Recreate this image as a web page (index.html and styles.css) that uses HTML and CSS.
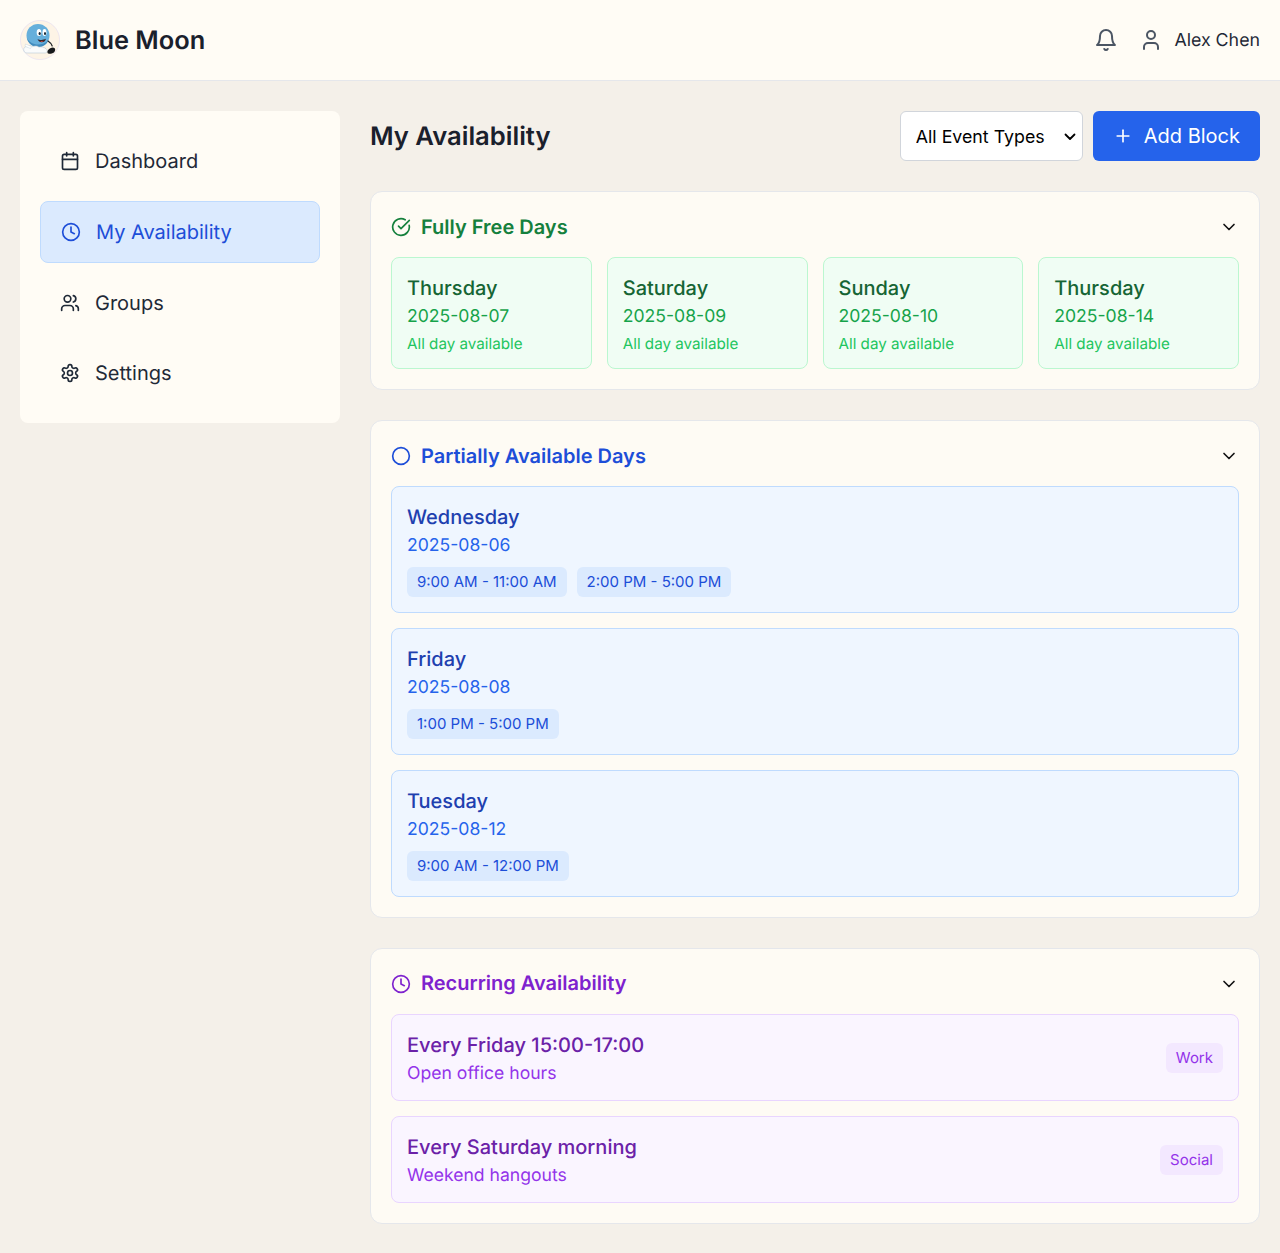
FILE: index.html
```html
<!DOCTYPE html>
<html lang="en">
<head>
  <meta charset="UTF-8">
  <meta name="viewport" content="width=device-width, initial-scale=1.0">
  <title>Blue Moon - My Availability</title>
  <link rel="stylesheet" href="styles.css">
</head>
<body>

  <header class="topbar">
    <div class="brand">
      <svg class="logo" viewBox="0 0 40 40">
        <circle cx="20" cy="20" r="19.6" fill="#fdf4e6" stroke="#e2daf0" stroke-width="0.6"/>
        <circle cx="18" cy="15.500" r="11.500" fill="#66afdb"/>
        <path d="M7 18c2 4 6 6.500 11 6.500 3.500 0 6.500-1 10-3.500-2 4-6 6-10 6-5 0-10-3.500-11-9z" fill="#418bbd"/>
        <ellipse cx="19" cy="12.500" rx="2.300" ry="3.600" fill="#fff"/>
        <ellipse cx="24.500" cy="12.500" rx="2" ry="3.400" fill="#fff"/>
        <ellipse cx="19.700" cy="13.500" rx="1.100" ry="1.600" fill="#14202c"/>
        <ellipse cx="25" cy="13.500" rx="1" ry="1.500" fill="#14202c"/>
        <path d="M17.500 19c2 1.300 6 1.300 8.500-.2-.8 2.700-2.300 3.400-4.200 3.400s-3.400-.9-4.300-3.200z" fill="#3a2326"/>
        <path d="M20 21.100h3.500l-1.700.9z" fill="#d9534f"/>
        <path d="M4 31c-1.200-2.500 1-5 3.500-4.300 1-1.500 4-1.500 5 0 2-1 5-1 6.500.5 2-.6 5-.2 7 1.500 2 1.700 1.500 4.300-1 4.300H7c-1.500 0-2.500-.8-3-2z" fill="#fafbfb" stroke="#b9cbd6" stroke-width="0.6"/>
        <path d="M5.500 24l6 2.500-1 2-5.500-2.200z" fill="#fff" stroke="#b9cbd6" stroke-width="0.4"/>
        <path d="M28 21c2 1.300 3.600 3 4.200 5" fill="none" stroke="#1c2024" stroke-width="1.200" stroke-linecap="round"/>
        <path d="M27.500 31c1-1.500 2.500-3.200 5-3.500 2 0 3 1.200 2.600 2.800-.4 1.700-1.600 2.900-3.300 3.200-2 .4-4 .3-4.300-.8-.1-.6 0-1.200 0-1.700z" fill="#16181b"/>
      </svg>
      <span class="brand-name">Blue Moon</span>
    </div>
    <div class="user-area">
      <svg class="icon icon-top" viewBox="0 0 24 24"><path d="M6 8a6 6 0 0 1 12 0c0 7 3 9 3 9H3s3-2 3-9"/><path d="M10.300 21a1.940 1.940 0 0 0 3.400 0"/></svg>
      <svg class="icon icon-top" viewBox="0 0 24 24"><path d="M19 21v-2a4 4 0 0 0-4-4H9a4 4 0 0 0-4 4v2"/><circle cx="12" cy="7" r="4"/></svg>
      <span class="user-name">Alex Chen</span>
    </div>
  </header>

  <div class="page">
    <nav class="sidebar">
      <a class="nav-item" href="#">
        <svg class="icon" viewBox="0 0 24 24"><path d="M8 2v4"/><path d="M16 2v4"/><rect x="3" y="4" width="18" height="18" rx="2"/><path d="M3 10h18"/></svg>
        Dashboard
      </a>
      <a class="nav-item active" href="#">
        <svg class="icon" viewBox="0 0 24 24"><circle cx="12" cy="12" r="10"/><polyline points="12 6 12 12 16 14"/></svg>
        My Availability
      </a>
      <a class="nav-item" href="#">
        <svg class="icon" viewBox="0 0 24 24"><path d="M16 21v-2a4 4 0 0 0-4-4H6a4 4 0 0 0-4 4v2"/><circle cx="9" cy="7" r="4"/><path d="M22 21v-2a4 4 0 0 0-3-3.870"/><path d="M16 3.130a4 4 0 0 1 0 7.750"/></svg>
        Groups
      </a>
      <a class="nav-item" href="#">
        <svg class="icon" viewBox="0 0 24 24"><path d="M12.220 2h-.44a2 2 0 0 0-2 2v.18a2 2 0 0 1-1 1.730l-.43.25a2 2 0 0 1-2 0l-.15-.08a2 2 0 0 0-2.730.73l-.22.38a2 2 0 0 0 .73 2.730l.15.1a2 2 0 0 1 1 1.720v.51a2 2 0 0 1-1 1.740l-.15.09a2 2 0 0 0-.73 2.730l.22.38a2 2 0 0 0 2.730.73l.15-.08a2 2 0 0 1 2 0l.43.25a2 2 0 0 1 1 1.730V20a2 2 0 0 0 2 2h.44a2 2 0 0 0 2-2v-.18a2 2 0 0 1 1-1.730l.43-.25a2 2 0 0 1 2 0l.15.08a2 2 0 0 0 2.730-.73l.22-.39a2 2 0 0 0-.73-2.730l-.15-.08a2 2 0 0 1-1-1.740v-.5a2 2 0 0 1 1-1.740l.15-.09a2 2 0 0 0 .73-2.730l-.22-.38a2 2 0 0 0-2.730-.73l-.15.08a2 2 0 0 1-2 0l-.43-.25a2 2 0 0 1-1-1.730V4a2 2 0 0 0-2-2z"/><circle cx="12" cy="12" r="3"/></svg>
        Settings
      </a>
    </nav>

    <main class="content">
      <div class="content-head">
        <h1>My Availability</h1>
        <div class="actions">
          <select class="type-select">
            <option>All Event Types</option>
            <option>Work</option>
            <option>Social</option>
          </select>
          <button class="add-btn">
            <svg class="icon" viewBox="0 0 24 24"><path d="M5 12h14"/><path d="M12 5v14"/></svg>
            Add Block
          </button>
        </div>
      </div>

      <section class="panel">
        <div class="panel-head green">
          <h2>
            <svg class="icon" viewBox="0 0 24 24"><path d="M21.801 10A10 10 0 1 1 17 3.335"/><path d="m9 11 3 3L22 4"/></svg>
            Fully Free Days
          </h2>
          <svg class="icon chevron" viewBox="0 0 24 24"><path d="m6 9 6 6 6-6"/></svg>
        </div>
        <div class="free-grid">
          <div class="free-card">
            <div class="day">Thursday</div>
            <div class="date">2025-08-07</div>
            <div class="note">All day available</div>
          </div>
          <div class="free-card">
            <div class="day">Saturday</div>
            <div class="date">2025-08-09</div>
            <div class="note">All day available</div>
          </div>
          <div class="free-card">
            <div class="day">Sunday</div>
            <div class="date">2025-08-10</div>
            <div class="note">All day available</div>
          </div>
          <div class="free-card">
            <div class="day">Thursday</div>
            <div class="date">2025-08-14</div>
            <div class="note">All day available</div>
          </div>
        </div>
      </section>

      <section class="panel">
        <div class="panel-head blue">
          <h2>
            <svg class="icon" viewBox="0 0 24 24"><circle cx="12" cy="12" r="10"/></svg>
            Partially Available Days
          </h2>
          <svg class="icon chevron" viewBox="0 0 24 24"><path d="m6 9 6 6 6-6"/></svg>
        </div>
        <div class="stack">
          <div class="part-card">
            <div class="day">Wednesday</div>
            <div class="date">2025-08-06</div>
            <div class="slots">
              <span class="slot">9:00 AM - 11:00 AM</span>
              <span class="slot">2:00 PM - 5:00 PM</span>
            </div>
          </div>
          <div class="part-card">
            <div class="day">Friday</div>
            <div class="date">2025-08-08</div>
            <div class="slots">
              <span class="slot">1:00 PM - 5:00 PM</span>
            </div>
          </div>
          <div class="part-card">
            <div class="day">Tuesday</div>
            <div class="date">2025-08-12</div>
            <div class="slots">
              <span class="slot">9:00 AM - 12:00 PM</span>
            </div>
          </div>
        </div>
      </section>

      <section class="panel">
        <div class="panel-head purple">
          <h2>
            <svg class="icon" viewBox="0 0 24 24"><circle cx="12" cy="12" r="10"/><polyline points="12 6 12 12 16 14"/></svg>
            Recurring Availability
          </h2>
          <svg class="icon chevron" viewBox="0 0 24 24"><path d="m6 9 6 6 6-6"/></svg>
        </div>
        <div class="stack">
          <div class="rec-card">
            <div>
              <div class="day">Every Friday 15:00-17:00</div>
              <div class="date">Open office hours</div>
            </div>
            <span class="tag">Work</span>
          </div>
          <div class="rec-card">
            <div>
              <div class="day">Every Saturday morning</div>
              <div class="date">Weekend hangouts</div>
            </div>
            <span class="tag">Social</span>
          </div>
        </div>
      </section>
    </main>
  </div>

</body>
</html>
```

FILE: styles.css
```css
* {
  box-sizing: border-box;
}

body {
  margin: 0;
  font-family: Inter, "Liberation Sans", sans-serif;
  font-size: 18px;
  line-height: 27px;
  color: #1f2937;
  background-color: #f4f0e9;
  text-rendering: geometricPrecision;
}

.icon {
  width: 20px;
  height: 20px;
  flex-shrink: 0;
  fill: none;
  stroke: currentColor;
  stroke-width: 2;
  stroke-linecap: round;
  stroke-linejoin: round;
}

/* top bar */
.topbar {
  height: 81px;
  padding: 0 20px;
  display: flex;
  align-items: center;
  justify-content: space-between;
  background-color: #fffcf5;
  border-bottom: 1px solid #e5e7eb;
}

.brand {
  display: flex;
  align-items: center;
  gap: 15px;
}

.logo {
  width: 40px;
  height: 40px;
}

.brand-name {
  font-size: 25.400px;
  font-weight: 600;
  color: #1a202c;
}

.user-area {
  display: flex;
  align-items: center;
  gap: 21px;
  color: #4b5563;
}

.icon-top {
  width: 24px;
  height: 24px;
}

.user-name {
  margin-left: -10px;
  font-size: 17.800px;
  color: #1f2937;
}

/* layout */
.page {
  padding: 30px 20px;
  display: flex;
  align-items: flex-start;
  gap: 30px;
}

.sidebar {
  width: 320px;
  flex-shrink: 0;
  padding: 20px;
  display: flex;
  flex-direction: column;
  gap: 10px;
  background-color: #fffcf5;
  border-radius: 8px;
}

.nav-item {
  display: flex;
  align-items: center;
  gap: 15px;
  padding: 16.500px 20px;
  font-size: 20px;
  color: #1f2937;
  text-decoration: none;
  border-radius: 8px;
}

.nav-item.active {
  color: #1d4ed8;
  background-color: #dbeafe;
  border: 1px solid #bfdbfe;
}

.content {
  flex: 1;
  min-width: 0;
  display: flex;
  flex-direction: column;
  gap: 30px;
}

.content-head {
  height: 50px;
  display: flex;
  align-items: center;
  justify-content: space-between;
}

h1 {
  margin: 0;
  font-size: 25.600px;
  font-weight: 600;
  color: #1a202c;
}

.actions {
  display: flex;
  gap: 10px;
}

.type-select {
  width: 183px;
  height: 50px;
  padding: 0 24px 0 15px;
  font-family: inherit;
  font-size: 17.800px;
  color: #000;
  appearance: none;
  background-color: #fff;
  background-image: url("data:image/svg+xml,%3Csvg xmlns='http://www.w3.org/2000/svg' viewBox='0 0 12 12'%3E%3Cpath d='M1.500 4.500 6 9l4.500-4.500' fill='none' stroke='%23000' stroke-width='1.800' stroke-linecap='round' stroke-linejoin='round'/%3E%3C/svg%3E");
  background-repeat: no-repeat;
  background-size: 12px 12px;
  background-position: right 5.500px center;
  border: 1px solid #d1d5db;
  border-radius: 6px;
}

.add-btn {
  height: 50px;
  padding: 0 20px;
  display: flex;
  align-items: center;
  gap: 11px;
  font-family: inherit;
  font-size: 20px;
  color: #fff;
  background-color: #2563eb;
  border: none;
  border-radius: 6px;
  cursor: pointer;
}

/* panels */
.panel {
  padding: 20px;
  background-color: #fefbf4;
  border: 1px solid #e5e7eb;
  border-radius: 12px;
}

.panel-head {
  height: 30.400px;
  margin-bottom: 15px;
  display: flex;
  align-items: center;
  justify-content: space-between;
}

.panel-head h2 {
  margin: 0;
  display: flex;
  align-items: center;
  gap: 10px;
  font-size: 20px;
  font-weight: 600;
}

.green { color: #15803d; }
.blue { color: #1d4ed8; }
.purple { color: #7e22ce; }

.chevron {
  color: #111;
}

.free-grid {
  display: grid;
  grid-template-columns: repeat(4, 1fr);
  gap: 15px;
}

.stack {
  display: flex;
  flex-direction: column;
  gap: 15px;
}

.free-card,
.part-card,
.rec-card {
  padding: 16px 15px;
  border-radius: 8px;
}

.day {
  font-size: 20px;
  line-height: 28px;
  font-weight: 500;
}

.date {
  margin-top: 2px;
  font-size: 17.600px;
  line-height: 26.400px;
}

.free-card {
  padding-bottom: 14.100px;
  background-color: #f0fdf4;
  border: 1px solid #bbf7d0;
}

.free-card .day { color: #166534; }
.free-card .date { color: #16a34a; }

.note {
  margin-top: 2.200px;
  font-size: 15.200px;
  line-height: 21px;
  color: #22c55e;
}

.part-card {
  padding-bottom: 15px;
  background-color: #eff6ff;
  border: 1px solid #bfdbfe;
}

.part-card .day { color: #1e40af; }
.part-card .date { color: #2563eb; }

.slots {
  margin-top: 7.300px;
  display: flex;
  gap: 10px;
}

.slot {
  padding: 0 10px;
  font-size: 15px;
  line-height: 30px;
  color: #1d4ed8;
  background-color: #dbeafe;
  border-radius: 6px;
}

.rec-card {
  padding-bottom: 12.600px;
  display: flex;
  align-items: center;
  justify-content: space-between;
  background-color: #faf5ff;
  border: 1px solid #e9d5ff;
}

.rec-card .day { color: #6b21a8; }
.rec-card .date { color: #9333ea; }

.tag {
  margin-bottom: 2px;
  padding: 0 10px;
  font-size: 15px;
  line-height: 30px;
  color: #9333ea;
  background-color: #f3e8ff;
  border-radius: 6px;
}
```
